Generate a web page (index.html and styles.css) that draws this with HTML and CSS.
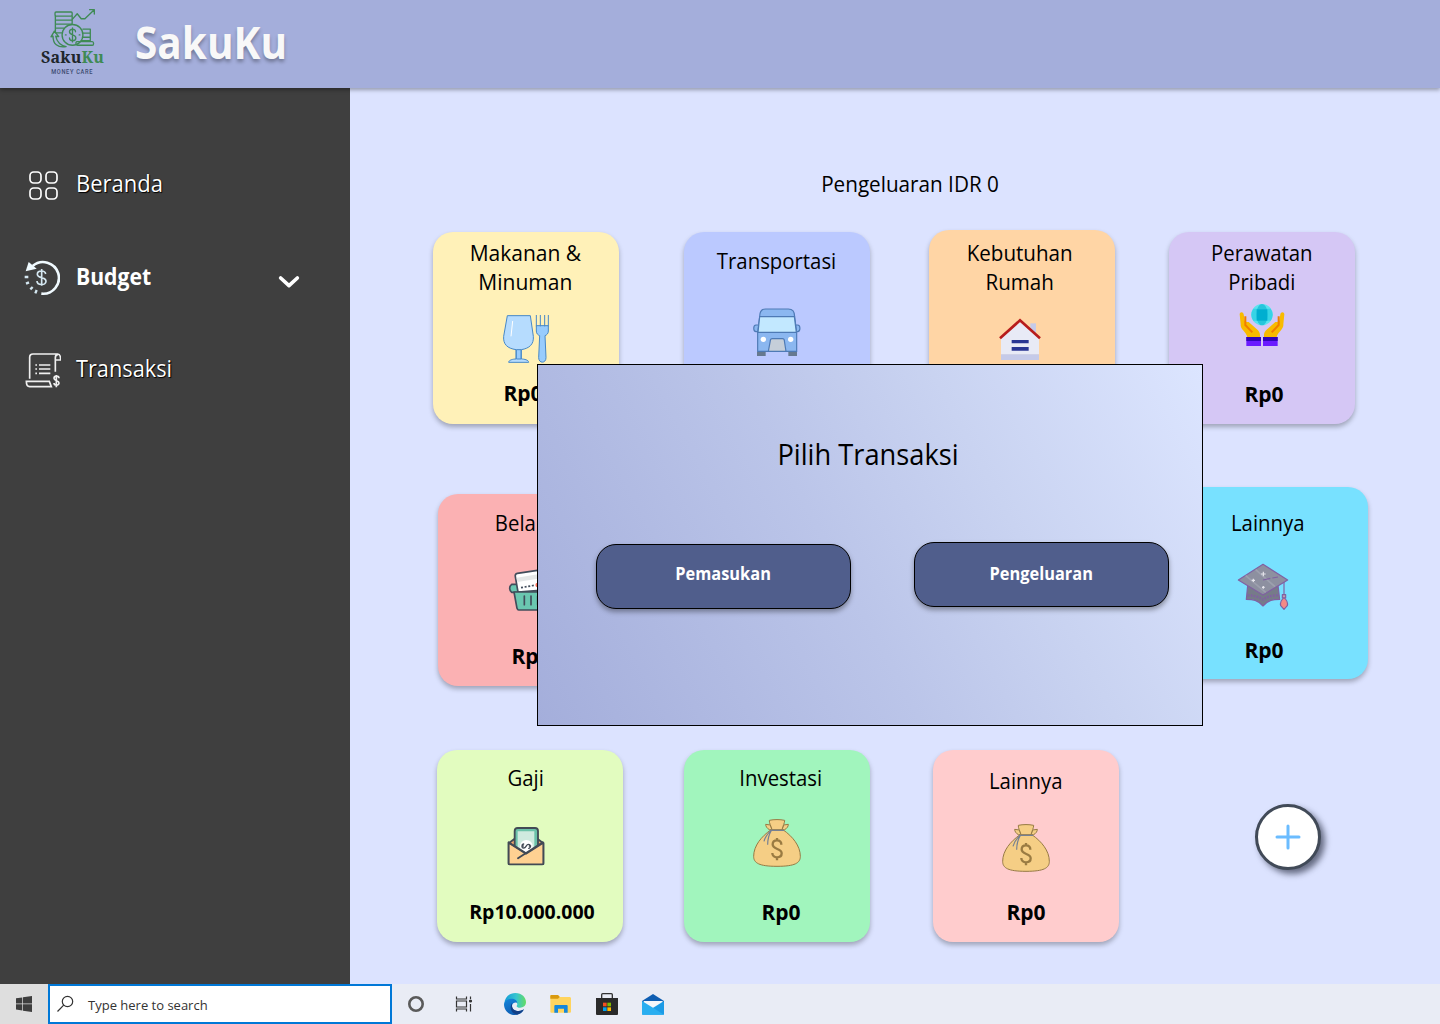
FILE: index.html
```html
<!DOCTYPE html>
<html lang="id">
<head>
<meta charset="utf-8">
<title>SakuKu</title>
<link rel="stylesheet" href="styles.css">
</head>
<body>
<svg class="defs" width="0" height="0">
  <symbol id="bag" viewBox="0 0 144 144">
    <path d="M53 33C26 52 2 80 2 112c0 20 16 30 70 30s70-10 70-30C142 80 118 52 91 33Z" fill="#f5ce85" stroke="#967a44" stroke-width="3"/>
    <path d="M57 32 49 32C42 28 38 22 38 16l14 2Zm30 0 8 0c7-4 11-10 11-16l-14 2Z" fill="#f5ce85" stroke="#967a44" stroke-width="3"/>
    <path d="M57 32C54 20 48 12 49 4c14-3 32-3 46 0 0 8-5 16-8 28Z" fill="#f5ce85" stroke="#967a44" stroke-width="3"/>
    <path d="M51 34h42M54 34C44 44 36 54 33 67M55 34c-7 12-11 27-11 43" fill="none" stroke="#768093" stroke-width="3.5"/>
    <path d="M85 77c0-8-5-13-13-13s-13 4-13 12c0 17 27 11 27 27 0 8-6 12-14 12s-14-5-14-13M72 57v9M72 114v10" fill="none" stroke="#9a7b42" stroke-width="7"/>
  </symbol>
</svg>

<header class="topbar">
  <div class="logo">
    <svg class="logo-art" viewBox="0 0 134 116" fill="none" stroke="#3f8a55" stroke-width="4" stroke-linecap="round" stroke-linejoin="round">
      <rect x="15" y="9" width="51" height="12" rx="3"/><path d="M16 21v12h48M16 33v12h38M16 45v12h25M16 57v14h18M66 21v22M16 33h50M50 45h15"/>
      <path d="M67 30 81 14 93 29 104 29 131 3M118 2h14v13"/>
      <circle cx="67" cy="77" r="31"/>
      <path d="M76 68c0-11-18-10-18 0 0 12 19 6 19 18 0 11-19 11-19 0M67 56v42"/>
      <path d="M46 77h2M87 77h2M98 60h22v12H98M99 72h21v12H99M97 84h23v10H94M80 97h46c5 0 5 11 0 11H82c-6 0-6-11-2-11Z"/>
      <path d="M3 83 13 66 26 82 17 81c4 19 15 28 31 31-26 4-39-8-39-31Z"/>
    </svg>
    <div class="logo-name">Saku<span>Ku</span></div>
    <div class="logo-tag">MONEY CARE</div>
  </div>
  <h1 class="brand">SakuKu</h1>
</header>

<div class="body">
  <nav class="side">
    <a class="nav home">
      <svg width="36" height="36" viewBox="0 0 108 108" fill="none" stroke="#fff" stroke-width="5"><rect x="15" y="15" width="33" height="33" rx="11"/><rect x="63" y="15" width="33" height="33" rx="11"/><rect x="15" y="63" width="33" height="33" rx="11"/><rect x="63" y="63" width="33" height="33" rx="11"/></svg>
      <span>Beranda</span>
    </a>
    <a class="nav budget">
      <svg width="36" height="36" viewBox="0 0 108 108" fill="none" stroke="#f0faff"><path d="M26 18A47.500 47.500 0 1 1 52 101" stroke-width="8"/><path d="M5 34 14 6 38 26Z" fill="#f0faff" stroke="none"/><path d="M2 51h11M6 71l9-4M19 88l7-7M34 100l4-10" stroke="#d5e8f2" stroke-width="7"/><path d="M65 42c-2-12-25-12-25 1 0 14 26 6 26 21 0 14-27 12-27-1M53 27v50" stroke="#d5e8f2" stroke-width="5"/></svg>
      <b>Budget</b>
      <svg class="chev" width="22" height="14" viewBox="0 0 66 42" fill="none" stroke="#fff" stroke-width="11" stroke-linecap="round" stroke-linejoin="round"><path d="M8 9 33 32 58 9"/></svg>
    </a>
    <a class="nav trans">
      <svg width="36" height="36" viewBox="0 0 108 108" fill="none" stroke="#efefef" stroke-width="5"><path d="M14 80V16c0-7 3-10 10-10h74c7 0 9 5 9 18H92M100 7c-7 0-9 4-9 10v42M6 88h67l6 16H14c-7 0-10-6-10-16Z"/><path d="M31 39h5M31 51h5M31 64h5M42 39h34M42 51h34M42 64h34"/><path d="M102 79c0-9-15-9-15 0s15 5 15 14-15 8-15 0M94 69v37"/></svg>
      <span>Transaksi</span>
    </a>
  </nav>

  <main class="main">
    <p class="total">Pengeluaran IDR 0</p>

    <div class="row r1">
      <section class="card makanan">
        <h2>Makanan &amp;<br>Minuman</h2>
        <svg class="ico" viewBox="0 0 144 144" stroke="#4788c7" stroke-width="3"><path d="M13 2h69l9 62c2 24-12 36-36 40v28c9 0 22 3 22 10H17c0-7 13-10 22-10v-28C13 100 0 88 2 64Z" fill="#b6dcfe"/><path d="M40 104v28h14v-28Z" fill="#98ccfd"/><path d="M29 18 24 64" stroke="#fff"/><path d="M100 32h36v16c0 8-5 12-10 14l3 66c0 18-22 18-22 0l3-66c-5-2-10-6-10-14Z" fill="#98ccfd"/><path d="M100 0v34M112 0v34M125 0v34M136 0v34"/></svg>
        <p class="sum">Rp0</p>
      </section>
      <section class="card transport">
        <h2>Transportasi</h2>
        <svg class="ico" viewBox="0 0 144 144" stroke="#4e7ab5" stroke-width="3.500"><path d="M16 51H9c-9 0-9 20 0 20h7M128 51h6c9 0 9 20 0 20h-6" fill="#8bb7f0"/><path d="M12 131h26v13H12ZM106 131h26v13h-26Z" fill="#66798f" stroke="none"/><path d="M20 26C20 10 26 3 38 3h68c12 0 19 7 19 23l6 48v56H14V74Z" fill="#8bb7f0"/><path d="M20 26h104l6 47H15Z" fill="#c2e8ff"/><path d="M46 130 52 98c0-4 2-6 6-6h30c4 0 6 2 6 6l5 32Z" fill="#c5ced9"/><circle cx="31" cy="94" r="8" fill="#fff" stroke="none"/><circle cx="113" cy="94" r="8" fill="#fff" stroke="none"/></svg>
      </section>
      <section class="card rumah">
        <h2>Kebutuhan<br>Rumah</h2>
        <svg class="ico" viewBox="0 0 144 144"><path d="M103 16h17v34h-17Z" fill="#c5cae9"/><path d="M72 12 15 60v50h114V60Z" fill="#e8eaf6"/><path d="M15 109h114v17H15Z" fill="#c5cae9"/><path d="M12 61 72 7l60 54" fill="none" stroke="#b71c1c" stroke-width="8"/><path d="M47 66h51v10H47ZM47 87h51v11H47Z" fill="#283593"/></svg>
      </section>
      <section class="card rawat">
        <h2>Perawatan<br>Pribadi</h2>
        <svg class="ico" viewBox="0 0 144 144"><circle cx="72" cy="44" r="32" fill="#5be3ef"/><path d="M46 26h52a32 32 0 0 1 0 36H46a32 32 0 0 1 0-36Z" fill="#37d4e6"/><ellipse cx="72" cy="44" rx="17" ry="32" fill="#26c6dc"/><path d="M56 28h32v34H56Z" fill="#00aed0"/><path d="M5 43c0-8 11-8 12 0l3 19 6 4 6 0L60 91c7 8 6 14 6 20H28C25 96 6 88 8 73Z" fill="#f8bb00"/><path d="M139 43c0-8-11-8-12 0l-3 19-6 4-6 0L84 91c-7 8-6 14-6 20h38c3-15 22-23 20-38Z" fill="#f8bb00"/><path d="M22 49v26l21 22M122 49v26l-21 22" fill="none" stroke="#f07e00" stroke-width="6"/><path d="M25 111h44v27H25ZM75 111h44v27H75Z" fill="#6a1bff"/><path d="M25 111h44v12H25ZM75 111h44v12H75Z" fill="#3205b8"/></svg>
        <p class="sum">Rp0</p>
      </section>
    </div>

    <div class="row r2">
      <section class="card belanja">
        <h2>Belanja</h2>
        <svg class="ico" viewBox="0 0 144 144" stroke="#424d5b" stroke-width="5" stroke-linejoin="round"><path d="M8 55h128c6 8 6 16 0 24H8c-8-6-8-18 0-24Z" fill="#6ac7b0"/><path d="m27 78-8-46c-1-5 1-9 6-10L120 8l10 62Z" fill="#fff"/><path d="m23 35 100-16 2 13L25 48Z" fill="#e5e7e7" stroke="none"/><path d="M36 65l40-7" stroke-dasharray="6 5"/><circle cx="86" cy="57" r="7" fill="#ff7058" stroke="none"/><path d="M15 78h114l-12 54H29c-3 0-4-2-5-5Z" fill="#6ac7b0"/><path d="M46 90v26M66 90v26M86 90v26M106 90v26" stroke-linecap="round"/></svg>
        <p class="sum">Rp0</p>
      </section>
      <section class="card lain">
        <h2>Lainnya</h2>
        <svg class="ico" viewBox="0 0 150 150" stroke="#8061a2" stroke-width="3.500" stroke-linejoin="round"><path d="M29 70 25 112c20 0 34 2 50 20 16-18 30-20 50-20l-5-42Z" fill="#767b89"/><path d="M29 100c18 0 34 4 46 13 12-9 28-13 46-13" fill="none" stroke-dasharray="5 4" stroke-width="7"/><path d="M75 7 149 54 75 99 1 54Z" fill="#8d90a0"/><path d="M23 41 83 91M53 23 111 74" stroke="#9da0ae" stroke-width="5"/><path d="M75 54l22-5M103 48l17-3M138 60v38" fill="none"/><path d="M133 98h10v10h-10Z" fill="#bd9eb0"/><path d="M138 107c7 6 12 16 10 24l-10 11-10-11c-2-8 3-18 10-24Z" fill="#f38a86"/><path d="M76 29v14M69 36h14M46 50v10M41 55h10M76 72v8M72 76h8" stroke="#e6e5ec"/></svg>
        <p class="sum">Rp0</p>
      </section>
    </div>

    <div class="row r3">
      <section class="card gaji">
        <h2>Gaji</h2>
        <svg class="ico" viewBox="0 0 144 144" stroke="#424a55" stroke-width="5.500" stroke-linejoin="round" stroke-linecap="round"><path d="M20 64 38 50h68l18 14v62H20Z" fill="#f2a66c"/><path d="M38 80V27c0-6 3-9 9-9h52c6 0 9 3 9 9v53L72 102Z" fill="#6bc2a9"/><path d="M47 90V28h50v62L72 96Z" fill="#cfeadf" stroke="none"/><circle cx="73" cy="73" r="19" fill="#fff" stroke="none"/><path d="M20 62v62c0 2 1 3 3 3h98c2 0 3-1 3-3V62L72 95Z" fill="#ffd192"/><path d="M65 66c-7 1-7 12 0 12 8 0 7-11 14-11 8 0 8 12 1 12M60 72h4M82 72h4" fill="none" stroke-width="4"/><path d="M48 109 122 61M20 61 72 94" fill="none"/></svg>
        <p class="sum">Rp10.000.000</p>
      </section>
      <section class="card invest">
        <h2>Investasi</h2>
        <svg class="ico"><use href="#bag"/></svg>
        <p class="sum">Rp0</p>
      </section>
      <section class="card lain2">
        <h2>Lainnya</h2>
        <svg class="ico"><use href="#bag"/></svg>
        <p class="sum">Rp0</p>
      </section>
      <button class="add"><svg width="26" height="26" viewBox="0 0 26 26" stroke="#6bbcff" stroke-width="3" stroke-linecap="round"><path d="M13 2v22M2 13h22"/></svg></button>
    </div>
  </main>
</div>

<div class="dialog">
  <h2>Pilih Transaksi</h2>
  <div class="choices">
    <button class="choice income"><span>Pemasukan</span></button>
    <button class="choice expense"><span>Pengeluaran</span></button>
  </div>
</div>

<footer class="taskbar">
  <div class="start"><svg width="16" height="16" viewBox="0 0 16 16" fill="#3e3e3e"><path d="M0 2.300 6.300 1.400V7.600H0ZM7 1.300 16 0V7.600H7ZM0 8.300H6.300V14.500L0 13.600ZM7 8.300H16V16L7 14.700Z"/></svg></div>
  <div class="search">
    <svg width="18" height="18" viewBox="0 0 18 18" fill="none" stroke="#333" stroke-width="1.200"><circle cx="10.500" cy="6.500" r="5.200"/><path d="M6.700 10.200 .5 16.500"/></svg>
    <span>Type here to search</span>
  </div>
  <svg class="cortana" width="18" height="18" viewBox="0 0 18 18"><circle cx="9" cy="9" r="6.700" fill="none" stroke="#5a5a5a" stroke-width="2.600"/></svg>
  <svg class="tasks" width="18" height="18" viewBox="0 0 18 18" fill="none" stroke="#333" stroke-width="1.200"><path d="M1.500 1.500V4h10V1.500M1.500 16.500V14h10v2.500M1.500 6h10v6h-10ZM15.500 1.500V4M15.500 9v7.500"/><circle cx="15.500" cy="6" r="1" fill="#333"/></svg>
  <svg class="edge" width="22" height="22" viewBox="0 0 66 66">
    <defs><linearGradient id="e1" x1="0" x2="1"><stop offset="0" stop-color="#149bd7"/><stop offset=".55" stop-color="#36c5d0"/><stop offset="1" stop-color="#65dc62"/></linearGradient><linearGradient id="e2" y2="1" x2=".5"><stop offset="0" stop-color="#1486dc"/><stop offset="1" stop-color="#0e5bb0"/></linearGradient></defs>
    <path d="M1 32C2 12 16 0 34 0c20 0 32 14 32 27 0 11-8 17-18 17-8 0-12-3-9-7 3-5-2-14-11-14-14 0-22 10-27 9Z" fill="url(#e1)"/>
    <path d="M0 33C2 24 12 17 22 17c11 0 18 6 18 14 0-5-16-4-16 8 0 9 9 15 20 15 8 0 13-3 16-5-5 11-15 17-27 17C14 66 0 52 0 33Z" fill="url(#e2)"/>
    <path d="M24 30c-10 16 0 32 15 35 9-2 17-8 21-16-3 2-8 5-16 5-11 0-20-6-20-15Z" fill="#123f87"/>
  </svg>
  <svg class="folder" width="21" height="18" viewBox="0 0 63 54"><path d="M1 3c0-2 1-3 3-3h20l6 6h28c3 0 5 2 5 4v40c0 2-1 3-3 3H4c-2 0-3-1-3-3Z" fill="#ffd45e"/><path d="M1 3c0-2 1-3 3-3h20l5 6-5 5H1Z" fill="#d99a10"/><path d="M13 53V33c0-2 1-3 3-3h34c2 0 3 1 3 3v20H42V41H24v12Z" fill="#1587dc"/></svg>
  <svg class="store" width="22" height="22" viewBox="0 0 66 66"><path d="M17 17V5c0-2 1-3 3-3h26c2 0 3 1 3 3v12" fill="none" stroke="#333" stroke-width="4"/><path d="M0 15h66v48c0 2-1 3-3 3H3c-2 0-3-1-3-3Z" fill="#2a2a2a"/><path d="M21 29h11v11H21Z" fill="#f25022"/><path d="M34 29h11v11H34Z" fill="#7fba00"/><path d="M21 43h11v11H21Z" fill="#00a4ef"/><path d="M34 43h11v11H34Z" fill="#ffb900"/></svg>
  <svg class="mail" width="22" height="21" viewBox="0 0 66 63"><path d="M0 21 33 0l33 21v14H0Z" fill="#0f5eb2"/><path d="M5 21h57v16L33 46 5 37Z" fill="#f5f6fa"/><path d="M66 21v41H0Z" fill="#1c9be6"/><path d="M0 21 33 41 66 62H0Z" fill="#29aef0"/></svg>
</footer>
</body>
</html>
```
FILE: styles.css
```css
* { box-sizing: border-box; }
body { margin: 0; width: 1440px; height: 1024px; overflow: hidden; position: relative; display: flex; flex-direction: column; background: #dce3ff; color: #000; font-family: "Open Sans", sans-serif; }
h1, h2, p { margin: 0; font-weight: 400; }
button { font: inherit; padding: 0; margin: 0; }
.defs { position: absolute; }

.topbar { flex: none; height: 88px; background: #a4aedb; display: flex; align-items: flex-start; padding-left: 38px; z-index: 1; box-shadow: 0 2px 4px rgba(0,0,0,.32); }
.logo { width: 69px; display: flex; flex-direction: column; align-items: center; padding-top: 9px; }
.logo-art { width: 45px; height: 39px; }
.logo-name { font: 700 16px/17px "Noto Serif", "DejaVu Serif", serif; color: #20262c; letter-spacing: .2px; margin-top: 1px; }
.logo-name span { color: #3f8a55; }
.logo-tag { font: 500 6.500px/8px Roboto, sans-serif; letter-spacing: .8px; color: #3c4a70; margin-top: 2px; transform: scaleX(.87); }
.brand { margin-left: 28px; font-size: 45px; line-height: 83px; font-weight: 700; color: #f8f8f8; text-shadow: 0 3px 4px rgba(0,0,0,.3); transform: scaleX(.9); transform-origin: left; }

.body { flex: 1; display: flex; min-height: 0; }
.side { width: 350px; background: #3f3f3f; color: #fff; padding: 79px 0 0 25px; }
.nav { display: flex; align-items: center; height: 36px; font-size: 23.500px; text-shadow: 0 0 1px #000, 1px 1px 1px #000; }
.nav span, .nav b { margin: -5px 0 0 15px; transform: scaleX(.935); transform-origin: left; }
.nav b { text-shadow: none; width: 202px; margin-left: 16px; transform: scaleX(.9); }
.nav.trans span { transform: scaleX(.925); }
.chev { margin-top: 7px; }
.budget { margin-top: 57px; }
.budget svg:first-child { margin-left: -1px; }
.trans { margin-top: 56px; }

.main { flex: 1; padding: 80px 0 0 83px; }
.total { width: 954px; text-align: center; font-size: 22px; line-height: 30px; transform: scaleX(.94); }
.row { display: grid; grid-template-columns: 251px 245px 240px 199px; align-items: start; }
.r1 { height: 256px; margin-top: 34px; }
.r2 { height: 262px; }
.card { width: 186px; height: 192px; border-radius: 20px; box-shadow: 0 3px 5px rgba(0,0,0,.28); display: grid; grid-template-rows: 66px 66px 60px; justify-items: center; align-items: start; }
.card h2 { font-size: 22px; line-height: 29px; text-align: center; margin-top: 14px; transform: scaleX(.925); white-space: nowrap; }
.ico { width: 48px; height: 48px; fill: none; overflow: visible; }
.sum { font-size: 21px; line-height: 29px; font-weight: 700; margin-top: 15px; }

.makanan { background: #fff1b8; }
.makanan h2, .rawat h2 { margin-top: 6px; }
.makanan h2 { margin-right: 2px; transform: scaleX(.955); }
.makanan .ico { margin: 17px 0 0 2px; }
.makanan .sum { margin-right: 6px; }
.transport { background: #bbc9ff; }
.transport .ico { margin-top: 10px; }
.rumah { background: #ffd5a5; margin-top: -2px; }
.rumah h2 { margin: 8px 4px 0 0; transform: scaleX(.935); }
.rumah .ico { margin: 22px 4px 0 0; }
.rawat { background: #d5c7f5; }
.rawat .ico { margin-top: 2px; }
.rawat .sum { margin: 16px 0 0 4px; }
.belanja { background: #fbb1b3; margin: 6px 0 0 5px; }
.belanja h2 { margin-right: 2px; }
.belanja .ico { margin: 6px 0 0 4px; }
.belanja .sum { margin-top: 16px; }
.lain { grid-column: 4; background: #78e1ff; margin: -1px 0 0 13px; }
.lain h2 { margin-top: 21px; margin-right: 14px; }
.lain .ico { width: 50px; height: 50px; margin: 9px 24px 0 0; }
.lain .sum { margin: 17px 22px 0 0; }
.gaji { background: #e2fcbf; margin-left: 4px; }
.gaji h2, .invest h2 { margin-top: 13px; }
.gaji h2 { margin-right: 8px; }
.gaji .ico { margin: 6px 8px 0 0; }
.invest { background: #a1f5bd; }
.invest h2, .invest .sum { margin-left: 8px; }
.invest .ico { margin-top: 3px; }
.invest .sum, .lain2 .sum { margin-top: 16px; }
.lain2 { background: #ffcccd; margin-left: 4px; }
.lain2 h2 { margin-top: 16px; }
.lain2 .ico { margin-top: 8px; }
.gaji .sum { margin: 15px 0 0 4px; font-size: 19.500px; }
.add { width: 66px; height: 66px; margin: 54px 0 0 86px; border: 3px solid #414a58; border-radius: 50%; background: #fff; display: flex; align-items: center; justify-content: center; box-shadow: 4px 4px 6px rgba(20,25,45,.6); }

.dialog { position: absolute; left: 537px; top: 364px; width: 666px; height: 362px; border: 1px solid #000; background: linear-gradient(62deg, #a4aedb, #bbc5e9 45%, #c9d3f1 68%, #dce5ff); z-index: 2; }
.dialog h2 { font-size: 29px; line-height: 40px; text-align: center; margin: 69px 4px 0 0; transform: scaleX(.94); }
.choices { display: flex; gap: 63px; padding: 68px 0 0 58px; }
.choice { width: 255px; height: 65px; border: 1px solid #000; border-radius: 20px; background: #505e8c; color: #fff; font-size: 17.500px; font-weight: 700; box-shadow: 0 3px 5px rgba(0,0,0,.35); padding-bottom: 4px; }
.choice span { display: inline-block; transform: scaleX(.935); }
.income { margin-top: 2px; padding-bottom: 8px; }

.taskbar { flex: none; height: 40px; background: #e9ecf5; display: flex; align-items: center; }
.start { width: 48px; height: 40px; background: #dedede; display: flex; align-items: center; justify-content: center; }
.search { width: 344px; height: 40px; border: 2px solid #0078d7; background: #fff; display: flex; align-items: center; padding-left: 7px; }
.search span { margin: 2px 0 0 13px; font-size: 13px; color: #333; }
.cortana { margin-left: 15px; }
.tasks { margin-left: 30px; }
.edge { margin-left: 31px; }
.folder { margin-left: 24px; }
.store { margin-left: 25px; }
.mail { margin-left: 24px; }
```
